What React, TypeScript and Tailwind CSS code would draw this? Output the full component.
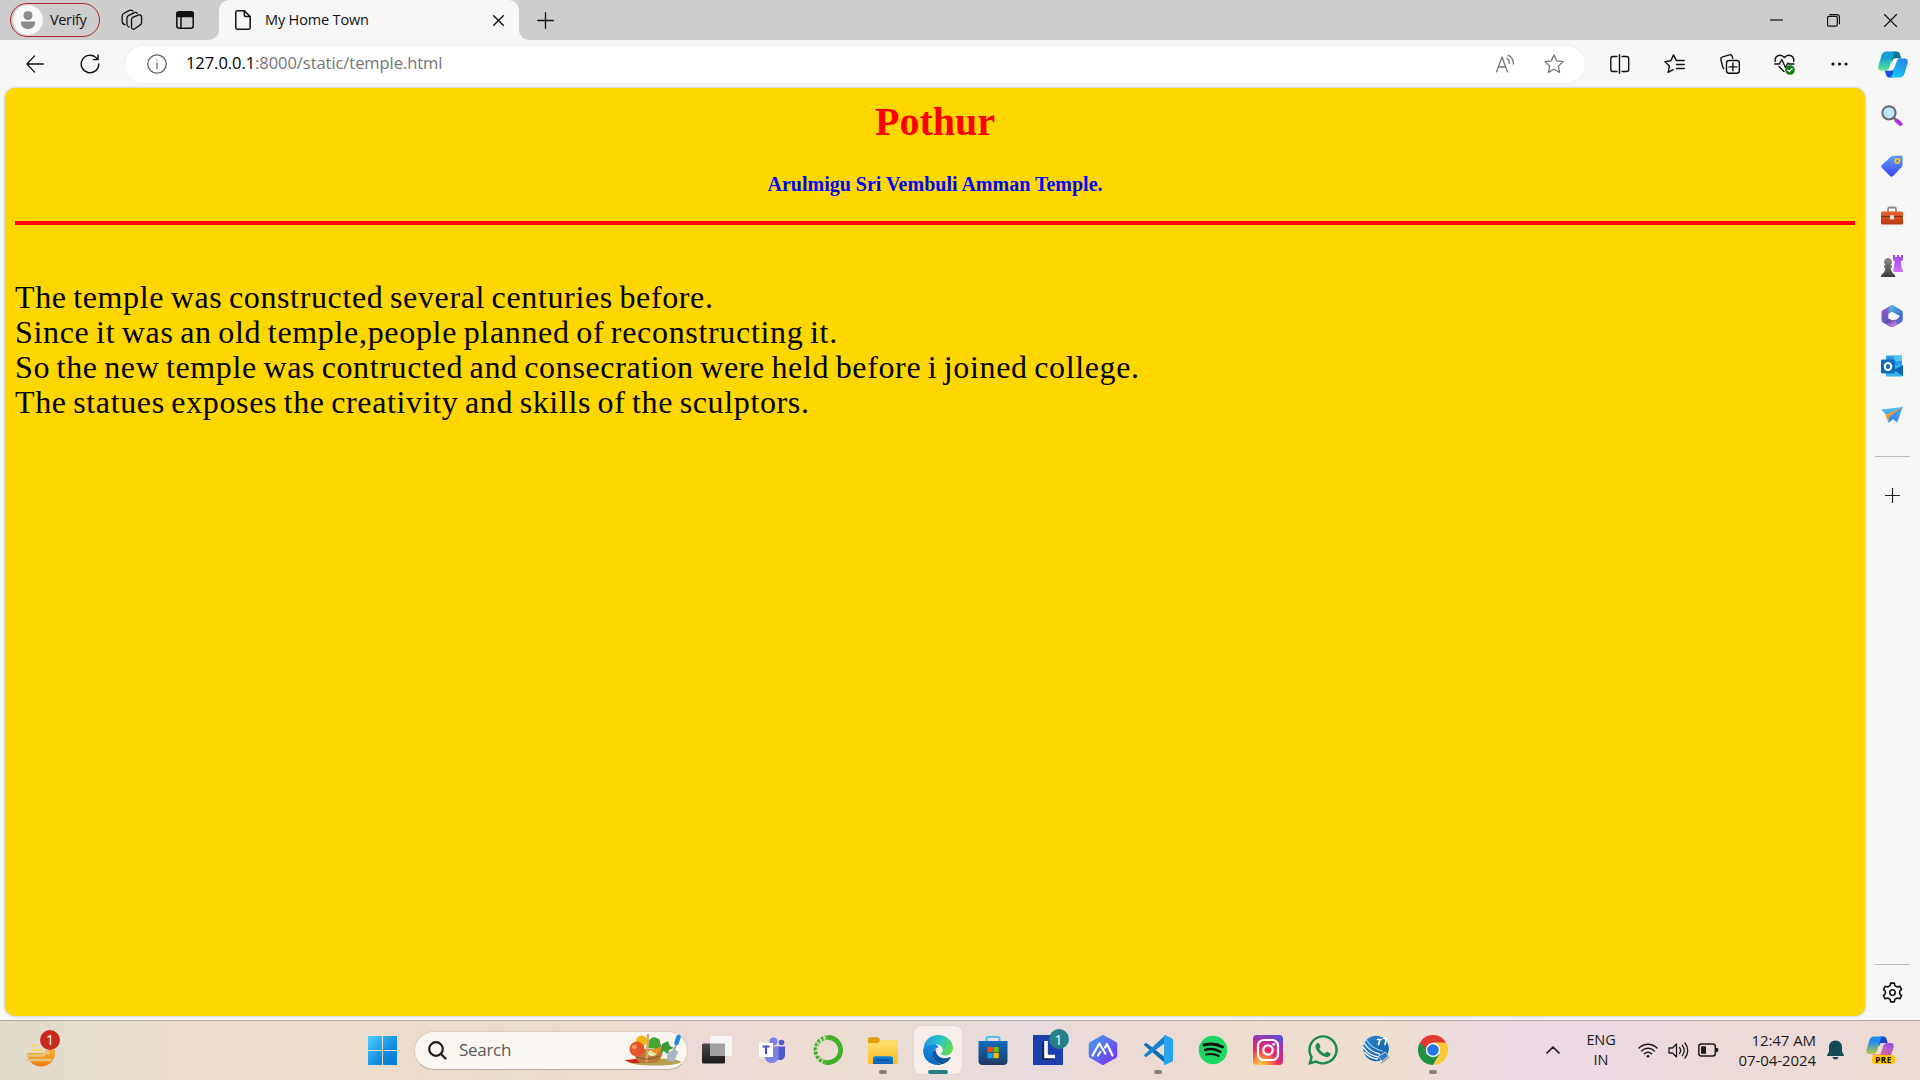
import React from "react";
import { FaWhatsapp } from "react-icons/fa";

type SvgProps = {
  w?: number;
  h?: number;
  vb: string;
  sw?: number;
  className?: string;
  children: React.ReactNode;
};

function Svg({ w = 24, h, vb, sw = 1.5, className = "", children }: SvgProps) {
  return (
    <svg
      width={w}
      height={h ?? w}
      viewBox={vb}
      fill="none"
      stroke="currentColor"
      strokeWidth={sw}
      strokeLinecap="round"
      strokeLinejoin="round"
      className={"block shrink-0 " + className}
    >
      {children}
    </svg>
  );
}

function Stop({ o, c }: { o: number; c: string }) {
  return <stop offset={o} stopColor={c} />;
}

function Grad({ id, from, to, v = false }: { id: string; from: string; to: string; v?: boolean }) {
  return (
    <linearGradient id={id} x1="0" y1="0" x2={v ? "0" : "1"} y2="1">
      <Stop o={0} c={from} />
      <Stop o={1} c={to} />
    </linearGradient>
  );
}

type CopilotProps = { id: string; a: string; b: string; c: string; d: string; top: string; bottom: string; gap: string };

function CopilotShape({ id, a, b, c, d, top, bottom, gap }: CopilotProps) {
  return (
    <g stroke="none">
      <defs>
        <linearGradient id={id + "l"} x1="0" y1="0" x2="0" y2="1">
          <Stop o={0.3} c={a} />
          <Stop o={1} c={b} />
        </linearGradient>
        <linearGradient id={id + "r"} x1="1" y1="0" x2="0.4" y2="1">
          <Stop o={0} c={c} />
          <Stop o={1} c={d} />
        </linearGradient>
      </defs>
      <path d="M15 .5h3.500c1.800 0 2.800.9 3.400 2.600L23.300 7.500h-6l-4 4z" fill={top} />
      <path d="M15 26.500h-3.500c-1.800 0-2.800-.9-3.400-2.600L6.900 19.500h6l4-4z" fill={bottom} />
      <path d="M8.500.5h10.200c-1.900.5-2.600 1.800-3.200 3.500l-3.900 12c-.8 2.300-2 3.500-4.100 3.500H3.500c-3 0-3.800-2.200-3-5L3.500 4.500C4.300 1.800 5.800.5 8.500.5z" fill={`url(#${id}l)`} />
      <path d="M21.500 26.500H11.300c1.900-.5 2.600-1.800 3.200-3.500l3.900-12c.8-2.300 2-3.500 4.100-3.500h4c3 0 3.800 2.200 3 5l-3 10c-.8 2.700-2.300 4-5 4z" fill={`url(#${id}r)`} />
      <path d="M15.200 8.200c.3-.5.800-.7 1.400-.7h4c-1.200.7-1.800 1.800-2.300 3.200L15.800 18c-.4 1-1 1.500-2 1.500h-3.400c.8-.6 1.300-1.500 1.700-2.600z" fill={gap} />
    </g>
  );
}

/* ---------- Tab strip ---------- */

function TabStrip() {
  return (
    <div className="flex h-10 items-stretch bg-[#cdcdcd] pl-[10px] text-[15px] text-[#111]">
      <div className="mt-[3px] flex h-[34px] w-[90px] items-center rounded-full border-[1.5px] border-[#b0272d] pl-[2px]">
        <div className="flex size-[30px] items-center justify-center rounded-full bg-[#f7f7f7]">
          <Svg w={18} vb="0 0 18 18">
            <g fill="#8c8c8c" stroke="none">
              <circle cx="9" cy="4.500" r="4.500" />
              <path d="M2 10.500h14v1.500c0 3.500-3 6-7 6s-7-2.500-7-6z" />
            </g>
          </Svg>
        </div>
        <span className="ml-[7px] text-[14.500px] tracking-[-0.35px]">Verify</span>
      </div>
      <div className="ml-[21px] flex items-center">
        <Svg w={22} vb="0 0 23 23" sw={1.400}>
          <path d="M12.300 8.700l5.700-2.400c1.900-.8 3.500.2 3.500 2.200v5.800c0 1-.4 1.800-1.300 2.300l-5.700 4c-1.800 1.200-3.500.3-3.500-1.800v-7.400c0-1.300.3-2.200 1.300-2.700z" />
          <path d="M8.500 19C7 18.500 6.200 17.500 6.200 16V9.800c0-1.300.5-2.300 1.500-2.800l6.300-3.200c1.200-.5 2.300-.2 3 .7" />
          <path d="M4.200 16.500C2.200 15.800 1.200 14.500 1.200 13V7.500c0-1.300.6-2.300 1.600-2.800l6-3.200c1.300-.6 2.700-.3 3.500.6" />
        </Svg>
      </div>
      <div className="ml-[33px] flex w-[18px] items-center">
        <Svg w={18} h={18} vb="0 0 18 18" sw={1.500}>
          <rect x="0.800" y="0.800" width="16.400" height="16.400" rx="2.500" />
          <path d="M1 1.500h16v4H1z" fill="currentColor" />
          <path d="M5 5v12" />
        </Svg>
      </div>
      <div className="ml-[15px] flex w-[10px] items-stretch bg-[#f7f7f7]">
        <div className="w-full rounded-br-[10px] bg-[#cdcdcd]" />
      </div>
      <div className="flex w-[300px] items-center rounded-t-[10px] bg-[#f7f7f7] pl-[16px]">
        <Svg w={16} h={20} vb="0 0 16 20" sw={1.500}>
          <path d="M2.500.8h6.800l5.900 5.800v10.900c0 1-.7 1.700-1.700 1.700h-11c-1 0-1.700-.7-1.700-1.700v-15C.8 1.500 1.500.8 2.500.8z" />
          <path d="M9.300.8v4.300c0 1 .5 1.500 1.500 1.500h4.400" />
        </Svg>
        <span className="ml-[14px] w-[228px] text-[14.500px] tracking-[-0.150px]">My Home Town</span>
        <Svg w={11} vb="0 0 11 11" sw={1.400}>
          <path d="M.7.7l9.600 9.600M10.300.7L.7 10.300" />
        </Svg>
      </div>
      <div className="flex w-[10px] items-stretch bg-[#f7f7f7]">
        <div className="w-full rounded-bl-[10px] bg-[#cdcdcd]" />
      </div>
      <div className="ml-[8px] flex items-center">
        <Svg w={17} vb="0 0 18 18" sw={1.400}>
          <path d="M9 .7v16.600M.7 9h16.600" />
        </Svg>
      </div>
      <div className="mr-px ml-auto flex items-center">
        <div className="flex w-[58px] justify-center">
          <Svg w={13} vb="0 0 13 13" sw={1.200}>
            <path d="M0 6h13" strokeLinecap="butt" />
          </Svg>
        </div>
        <div className="flex w-[57px] justify-center">
          <Svg w={13} vb="0 0 14 14" sw={1.300}>
            <rect x="0.600" y="2.600" width="10.500" height="10.500" rx="1.500" />
            <path d="M3 .6h7.500c1.700 0 2.900 1.200 2.900 2.900v7" />
          </Svg>
        </div>
        <div className="flex w-[57px] justify-center">
          <Svg w={13} vb="0 0 13 13" sw={1.200}>
            <path d="M.5.5l12 12M12.500.5l-12 12" />
          </Svg>
        </div>
      </div>
    </div>
  );
}

/* ---------- Address toolbar ---------- */

const STAR = "M10 .9l2.700 5.900 6.400.8-4.700 4.400 1.200 6.400L10 15.300l-5.600 3.100L5.600 12 .9 7.600l6.400-.8z";

function Toolbar() {
  return (
    <div className="flex h-12 items-center bg-[#f7f7f7] text-[#111]">
      <div className="ml-[25px] flex w-[55px]">
        <Svg w={20} h={18} vb="0 0 20 20" sw={1.400} className="-mt-px">
          <path d="M19.300 10H1M9.500 1L1 10l8.500 9" />
        </Svg>
      </div>
      <div className="flex w-[45px]">
        <Svg w={20} vb="0 0 21 21" sw={1.500}>
          <path d="M19.700 10.500a9.200 9.200 0 1 1-3-6.800l2 2M19 .9v5h-5" />
        </Svg>
      </div>
      <div className="flex h-[37px] w-[1460px] items-center rounded-full bg-white shadow-[0_0_3px_rgba(0,0,0,0.08)]">
        <Svg w={20} vb="0 0 20 20" sw={1.300} className="ml-[22px] text-[#666]">
          <circle cx="10" cy="10" r="9.200" />
          <path d="M10 9v5.500M10 5.800v.2" />
        </Svg>
        <span className="mb-px ml-[19px] text-[16.500px] tracking-[-0.060px] text-[#757575]">
          <span className="text-black">127.0.0.1</span>:8000/static/temple.html
        </span>
        <Svg w={20} vb="0 0 20 20" sw={1.300} className="mr-[29px] ml-auto text-[#777]">
          <path d="M1.500 18L7 3l5.500 15M3.300 13h7.400" />
          <path d="M12 4.500c1.600 1 2.500 2.700 2.500 5M13 1.200c3.500 1.500 5.500 4.300 5.500 9" />
        </Svg>
        <Svg w={20} vb="0 0 20 20" sw={1.300} className="mr-[21px] text-[#777]">
          <path d={STAR} />
        </Svg>
      </div>
      <div className="ml-[7px] flex items-center">
        <div className="flex w-[55px] justify-center">
          <Svg w={20} vb="0 0 20 20" sw={1.400}>
            <path d="M9.500.7v18.600M7 2.500H3C1.700 2.500.8 3.400.8 4.700v10.600c0 1.300.9 2.200 2.200 2.200h4M12 2.500h4.500c1.300 0 2.200.9 2.200 2.200v10.600c0 1.300-.9 2.200-2.200 2.200H12" />
          </Svg>
        </div>
        <div className="flex w-[55px] justify-center">
          <Svg w={21} h={20} vb="0 0 21 20" sw={1.400}>
            <path d="M12.300 6.500L9.500.9 6.800 6.800l-6 .8L5.400 12l-1.200 6.400 4.900-2.700" />
            <path d="M12.500 6.500h7.800M12.500 10.500h7.800M12.500 14.500h7.800" />
          </Svg>
        </div>
        <div className="flex w-[55px] justify-center">
          <Svg w={20} vb="0 0 20 20" sw={1.400}>
            <path d="M3.800 14.500c-.6-.2-.9-.7-1.100-1.400L.9 5.500c-.3-1.300.3-2.300 1.500-2.600L9.500.9c1.300-.3 2.300.3 2.700 1.500l.5 2" />
            <rect x="6.500" y="6.500" width="12.800" height="12.800" rx="2.500" />
            <path d="M12.900 9v7.800M9 12.900h7.800" />
          </Svg>
        </div>
        <div className="flex w-[55px] justify-center">
          <Svg w={21} vb="0 0 21 21" sw={1.400}>
            <path d="M1.200 7.500C.6 4 2.700 1.200 6 1.200c1.800 0 3.200.8 4.400 2.300 1.200-1.500 2.600-2.300 4.400-2.300 3.500 0 5.500 2.800 5 6.300M5 12.500l5 5" />
            <path d="M.8 10h4.500l2.500-4.500 3.600 8 2.500-4.500 1 1h5" />
            <circle cx="16" cy="16" r="4.800" fill="#127c12" stroke="none" />
            <path d="M13.800 16.200l1.500 1.300 2.700-2.800" stroke="white" />
          </Svg>
        </div>
        <div className="flex w-[55px] justify-center">
          <Svg w={17} h={4} vb="0 0 17 4">
            <g fill="currentColor" stroke="none">
              <circle cx="2" cy="2" r="1.600" />
              <circle cx="8.500" cy="2" r="1.600" />
              <circle cx="15" cy="2" r="1.600" />
            </g>
          </Svg>
        </div>
      </div>
      <div className="ml-[11px]">
        <Svg w={30} h={27} vb="0 0 30 27">
          <CopilotShape id="cb" a="#129fd8" b="#5fe592" c="#2b7be4" d="#12c8f4" top="#0f6f96" bottom="#1b50d8" gap="#f7f7f7" />
        </Svg>
      </div>
    </div>
  );
}

/* ---------- Sidebar ---------- */

const sideIcons: React.ReactNode[] = [
  <>
    <path d="M15.500 15.500l4 3.500" stroke="#b42bf0" strokeWidth="4" />
    <path d="M12.500 12.500l2 2" stroke="#777" strokeWidth="2.500" />
    <circle cx="8" cy="7.800" r="6.600" fill="#bfe6fa" stroke="#666" strokeWidth="2" />
  </>,
  <g stroke="none">
    <defs><Grad id="tag" from="#5ea0ff" to="#3a45ee" v /></defs>
    <path d="M12 1l8-.5c1 0 1.500.5 1.500 1.500v8c0 1-.3 1.600-1 2.300L12 21c-1 1-2 1-3 0l-8-8c-1-1-1-2 0-3l8.500-8c.8-.7 1.500-1 2.500-1z" fill="url(#tag)" />
    <circle cx="16.300" cy="6" r="2.100" fill="#5b7fee" stroke="#fbc928" strokeWidth="1.800" />
  </g>,
  <>
    <defs><Grad id="box" from="#e8622c" to="#b93a12" v /></defs>
    <path d="M7 7V4c0-1 .7-1.500 1.500-1.500h5c1 0 1.500.5 1.500 1.500v3" stroke="#888" strokeWidth="1.800" />
    <rect x="0" y="6.500" width="22" height="13" rx="1.500" fill="url(#box)" stroke="none" />
    <path d="M0 11.500h22" stroke="#7c2a10" strokeWidth="1" />
    <rect x="9" y="10" width="4" height="4.500" rx="1" fill="#ddd" stroke="none" />
  </>,
  <g stroke="none">
    <defs>
      <Grad id="pawn" from="#8a8a8a" to="#3a3a3a" v />
      <Grad id="rook" from="#a247f2" to="#cc73fa" v />
    </defs>
    <path d="M12 0h2.200v2h1.800V0h2.200v2H20V0h2v5l-2 1.500.8 7.500 1.200 1v2H12.500v-3l1.200-7.500L12 5z" fill="url(#rook)" />
    <path d="M7 3a3.800 3.800 0 0 1 2.500 6.700l1.500 1v1.800H9.700c0 3 .8 4.500 3 6.500 1 .7 1.600 1.500 1.600 3.500H0c0-2 .5-2.800 1.500-3.500 2.200-2 2.800-3.500 2.800-6.500H3v-1.800l1.500-1A3.800 3.800 0 0 1 7 3z" fill="url(#pawn)" />
  </g>,
  <g stroke="none">
    <defs>
      <Grad id="ma" from="#9a55c0" to="#5b5fc4" v />
      <Grad id="mb" from="#4cc2ee" to="#3a56b8" />
      <Grad id="mc" from="#5b3fa0" to="#d293e6" />
    </defs>
    <path d="M11 0L2 5c-1 .6-1.500 1.500-1.500 2.700v7c0 1.500.8 2.500 2 3L8 15V8l5-3z" fill="url(#ma)" />
    <path d="M10.500 0c-2 1-3 3-3 5.500V9L11 7l8 4 2.500 5V7.700c0-1.200-.5-2.100-1.500-2.700L13 .7C12.200.2 11.500 0 10.500 0z" fill="url(#mb)" />
    <path d="M21.500 8v6.700c0 1.200-.5 2.200-1.500 2.800l-7 4c-1.300.8-2.700.8-4 0L6 19.800c3 0 5-.8 7-2z" fill="#4a6bdc" />
    <path d="M2 17.300l7-4 2 2 7-1-9 7.500z" fill="#6a48a8" />
    <path d="M2.500 17.700l6.500 3.800c1.300.8 2.700.8 4 0l3-1.700-1-5-4 1.700c-3 1.700-5.500 2.200-8.500 1.200z" fill="url(#mc)" />
    <path d="M11 7l3.700 2v4.200L11 15.300 7.300 13.200V9z" fill="#f7f7f7" />
  </g>,
  <g stroke="none">
    <rect x="5" y="0.500" width="16" height="13" rx="1" fill="#2a9be4" />
    <path d="M13 .5h7c.6 0 1 .4 1 1V6h-8z" fill="#4bc8f5" />
    <path d="M5 11l17-1v10c0 1-.6 1.500-1.500 1.500h-14C5.500 21.500 5 21 5 20z" fill="#35b4f0" />
    <path d="M22 10v11L13 15z" fill="#1364b4" />
    <rect x="0" y="4.500" width="14" height="14" rx="1.200" fill="#0f6cbd" />
    <ellipse cx="7" cy="11.500" rx="3.200" ry="3.600" stroke="white" strokeWidth="2" />
  </g>,
  <g stroke="none">
    <defs><Grad id="pl" from="#55c4f5" to="#2a7ef0" v /></defs>
    <path d="M0 4.500L22 2l-6 15.500-4-3.500-4 3.500-2-7z" fill="url(#pl)" />
    <path d="M22 2L4.500 10l2.300 6.500 1.400-4.500z" fill="#f2a01e" />
    <path d="M22 2L8.200 12l-.7 6 3.500-3.500z" fill="#3b8df2" />
  </g>,
];

function gearPath(): string {
  const pts: string[] = [];
  for (let i = 0; i < 6; i++) {
    const base = i * 60 - 90;
    [[-19, 7.300], [-11, 9.600], [11, 9.600], [19, 7.300]].forEach(([a, r]) => {
      const t = ((base + a) * Math.PI) / 180;
      pts.push(`${(10.500 + r * Math.cos(t)).toFixed(2)} ${(10.500 + r * Math.sin(t)).toFixed(2)}`);
    });
  }
  return "M" + pts.join("L") + "z";
}

function Sidebar() {
  return (
    <div className="flex w-[55px] flex-col items-center pt-[3px] pr-px">
      {sideIcons.map((icon, i) => (
        <div key={i} className="flex h-[50px] items-center">
          <Svg w={22} vb="0 0 22 22">{icon}</Svg>
        </div>
      ))}
      <div className="mt-[15px] ml-px h-px w-[35px] bg-[#b9b9b9]" />
      <Svg w={15} vb="0 0 15 15" sw={1.200} className="mt-[31px] text-[#222]">
        <path d="M7.500 0v15M0 7.500h15" />
      </Svg>
      <div className="mt-auto ml-px h-px w-[35px] bg-[#b9b9b9]" />
      <Svg w={21} vb="0 0 21 21" sw={1.600} className="mt-[17px] mb-[17px] text-[#111]">
        <path d={gearPath()} />
        <circle cx="10.500" cy="10.500" r="2.700" />
      </Svg>
    </div>
  );
}

/* ---------- Web page ---------- */

function TemplePage() {
  return (
    <div className="ml-[5px] h-[928px] w-[1860px] rounded-[10px] bg-[#ffd700] px-[10px] pt-[11px] font-['Liberation_Serif',serif] shadow-[0_0_3px_rgba(0,0,0,0.3)]">
      <h1 className="h-[46px] text-center text-[40px] leading-[46px] font-bold text-[#ff0000]">Pothur</h1>
      <h2 className="mt-[28px] h-[23px] text-center text-[20px] leading-[23px] font-bold text-[#0000ff]">
        Arulmigu Sri Vembuli Amman Temple.
      </h2>
      <div className="mt-[25px] h-[4px] bg-[#ff0000]" />
      <div className="mt-[55px] text-[32px] leading-[35px] [word-spacing:-2.1px] whitespace-nowrap text-black">
        <p className="tracking-[0.640px]">The temple was constructed several centuries before.</p>
        <p className="tracking-[0.680px]">Since it was an old temple,people planned of reconstructing it.</p>
        <p className="tracking-[0.640px]">So the new temple was contructed and consecration were held before i joined college.</p>
        <p className="tracking-[0.640px]">The statues exposes the creativity and skills of the sculptors.</p>
      </div>
    </div>
  );
}

/* ---------- Taskbar ---------- */

function App30({ children }: { children: React.ReactNode }) {
  return <Svg w={30} vb="0 0 30 30">{children}</Svg>;
}

const teams = (
  <Svg w={30} vb="2 0 30 30">
    <g stroke="none">
      <circle cx="25.500" cy="7.500" r="2.800" fill="#5059c9" />
      <path d="M20 11.500h9v8.500c0 3-2 5-5 5-2 0-4-1-4-3z" fill="#5059c9" />
      <circle cx="17.500" cy="6.500" r="4" fill="#7b83eb" />
      <path d="M9 11.500h13.500v10c0 4-3 6.500-6.800 6.500S9 25.500 9 21.500z" fill="#7b83eb" />
      <rect x="3" y="8" width="14" height="14" fill="white" />
    </g>
    <path d="M6.500 11.500h7M10 11.500v7.500" stroke="#4b53bc" strokeWidth="2.200" strokeLinecap="butt" />
  </Svg>
);

const anaconda = (
  <App30>
    <path d="M15 2.500a12.500 12.500 0 1 1-3 24.600" stroke="#43b02a" strokeWidth="4.800" strokeLinecap="butt" />
    <path d="M15 2.500a12.500 12.500 0 0 0-3 24.600" stroke="#43b02a" strokeWidth="4.200" strokeLinecap="butt" strokeDasharray="3 1.200" />
    <path d="M13 2.500a12.500 12.500 0 0 0-4 22" stroke="#e9ddd0" strokeWidth="1" strokeDasharray="3 2" />
  </App30>
);

const explorer = (
  <App30>
    <defs><Grad id="fo" from="#ffdf70" to="#fbbd24" v /><Grad id="fb" from="#0f86dd" to="#1160b8" v /></defs>
    <g stroke="none">
      <path d="M0 4c0-1 .7-1.800 1.800-1.800h7c1 0 1.700.3 2.300 1.300l1.500 2H29V10H0z" fill="#dfa008" />
      <path d="M0 8h10l2.500-2.700H28c1.200 0 2 .7 2 1.700v20c0 1.200-.8 2-2 2H2c-1.200 0-2-.8-2-2z" fill="url(#fo)" />
      <path d="M5 29v-5.500c0-1.500 1-2.300 2.300-2.300h15.400c1.300 0 2.300.8 2.300 2.300V29z" fill="url(#fb)" />
    </g>
    <path d="M9 25h12" stroke="#0b4c94" strokeWidth="1.300" />
  </App30>
);

const edge = (
  <App30>
    <defs>
      <linearGradient id="ea" x1="0" y1="0.300" x2="1" y2="0.600">
        <Stop o={0} c="#1b9de2" /><Stop o={0.5} c="#2cc3c9" /><Stop o={1} c="#62dd4e" />
      </linearGradient>
      <Grad id="eb" from="#1590e0" to="#0b66c0" v />
    </defs>
    <g stroke="none">
      <path d="M0.500 13C1.500 5 8 0 15 0c8.500 0 15 6 15 13 0 4.500-3.500 7.500-7.500 7.500-3 0-5-1-4.500-2.200 1.300-1 1.800-2 1.800-3.300 0-3.500-3.500-6-8-6C7 9 3 11 .5 13z" fill="url(#ea)" />
      <path d="M12 9C6 9 1 11 .1 14.500-.3 23.500 6 30 15 30c2 0 3-.3 4-.7-5-.3-9.500-5-9-10 .2-3.500 2-6 5.500-7-1-2-2-3.300-3.500-3.300z" fill="url(#eb)" />
      <path d="M12.500 14c-2 1.500-3 3.500-2.700 6.300.7 6 6 9.700 10.700 8.500 3-1 5.500-3 7.200-6 .3-.7-.3-1-.9-.7-6 3-14 .3-14.300-8.100z" fill="#0c55a0" />
    </g>
  </App30>
);

const store = (
  <App30>
    <defs><Grad id="st" from="#0f6cbd" to="#233a63" v /></defs>
    <path d="M8.500 7V3.500c0-1 .7-1.700 1.700-1.700h9.600c1 0 1.700.7 1.700 1.700V7" stroke="#3cbcf0" strokeWidth="1.800" />
    <path d="M.5 6h29v20c0 2.500-1.500 4-4 4h-21c-2.500 0-4-1.500-4-4z" fill="url(#st)" stroke="none" />
    <g stroke="none">
      <rect x="9.500" y="12" width="5.200" height="5.200" fill="#f25022" />
      <rect x="15.500" y="12" width="5.200" height="5.200" fill="#7fba00" />
      <rect x="9.500" y="18" width="5.200" height="5.200" fill="#00a4ef" />
      <rect x="15.500" y="18" width="5.200" height="5.200" fill="#ffb900" />
    </g>
  </App30>
);

const lApp = (
  <div className="relative">
    <App30>
      <rect width="30" height="30" fill="#1e3fae" stroke="none" />
      <path d="M9 8l2-2v15h10l-1 4H9z" fill="#0f2464" stroke="none" />
      <path d="M13 6v15.500h9" stroke="white" strokeWidth="3.600" strokeLinecap="butt" strokeLinejoin="miter" />
    </App30>
    <div className="absolute -top-[6px] left-[16px] flex size-[20px] items-center justify-center rounded-full bg-[#26808a] text-[14px] text-white">1</div>
  </div>
);

const aApp = (
  <App30>
    <defs><Grad id="aa" from="#3fa0f0" to="#7a2cf0" /></defs>
    <path d="M15 .7l12.500 7c.7.400 1 1 1 1.800v11c0 .8-.3 1.400-1 1.800l-12.500 7-12.500-7c-.7-.4-1-1-1-1.800v-11c0-.8.3-1.400 1-1.800z" fill="url(#aa)" stroke="url(#aa)" />
    <path d="M4.500 20.500L11.300 8.500l6 10M10 20.500l2.300-3.500M17 12.500l2-3.500 5.500 11.500" stroke="white" strokeWidth="2.200" />
  </App30>
);

const vscode = (
  <App30>
    <g stroke="none">
      <path d="M2 8.500c.6-.5 1.300-.5 2 0L23 23v6L1.500 10.500c-.7-.7-.6-1.200.5-2z" fill="#0a6cb4" />
      <path d="M1.500 19.500L22.500 0v7.500L4 21.500c-.7.500-1.400.5-2 0-1-.8-1.100-1.400-.5-2z" fill="#1482cc" />
      <path d="M22 0l7 3.300c.6.300 1 .9 1 1.700v20c0 .8-.4 1.400-1 1.700L22 30c-.8 0-1-.5-1-1V1c0-.5.200-1 1-1z" fill="#2aa4f0" />
    </g>
  </App30>
);

const spotify = (
  <App30>
    <circle cx="15" cy="15" r="14.300" fill="#1ed760" stroke="none" />
    <path d="M6 10c6-1.800 13-1.200 18.500 2" stroke="#111" strokeWidth="3" />
    <path d="M7 15c5-1.500 11-.8 15.500 1.800" stroke="#111" strokeWidth="2.500" />
    <path d="M8 19.500c4.500-1.100 9-.6 12.800 1.600" stroke="#111" strokeWidth="2" />
  </App30>
);

const instagram = (
  <App30>
    <defs>
      <radialGradient id="ig" cx="0.250" cy="1.050" r="1.150">
        <Stop o={0} c="#ffdc60" /><Stop o={0.25} c="#fd8a35" /><Stop o={0.5} c="#ee2a62" /><Stop o={0.8} c="#b32ba8" /><Stop o={1} c="#5a50d0" />
      </radialGradient>
    </defs>
    <rect width="30" height="30" rx="4" fill="url(#ig)" stroke="none" />
    <rect x="5" y="5" width="20" height="20" rx="5.500" stroke="white" strokeWidth="2.200" />
    <circle cx="15" cy="15" r="4.700" stroke="white" strokeWidth="2.200" />
    <circle cx="20.700" cy="9.300" r="1.400" fill="white" stroke="none" />
  </App30>
);

const globe = (
  <Svg w={30} vb="1.500 0 30 30">
    <defs><Grad id="gl" from="#2b8ad6" to="#0d5a9c" /></defs>
    <circle cx="14.500" cy="13.500" r="12.800" fill="url(#gl)" stroke="none" />
    <path d="M3 8.500c4 6 9 9 15 10.500M2 12.500c4 6 9 8.500 15 9.500M3 17.500c4 4 8 6 13 6.500" stroke="white" strokeWidth="1.300" />
    <path d="M5 5c3 6 8 9 16 11" stroke="#9cc6e6" strokeWidth="1.200" />
    <path d="M16 4.500h4M18.500 4.500L17 9.500M22 3.500h4M25 3.500l-1.500 6" stroke="white" strokeWidth="1.700" />
    <path d="M17 21l7-4 3 4-6 5z" fill="#2a7cc4" stroke="#cfd6dc" strokeWidth="1" />
    <path d="M20 28l7.500-6" stroke="#999" strokeWidth="1.200" />
  </Svg>
);

const chrome = (
  <App30>
    <g stroke="none">
      <path d="M15 15L2 7.500A15 15 0 0 1 28 7.500z" fill="#e33b2e" />
      <path d="M15 7.500h13A15 15 0 0 1 15 30l6.500-11z" fill="#fcc934" />
      <path d="M2 7.500A15 15 0 0 0 15 30l6.500-11.300L8.500 18.700z" fill="#1e9143" />
      <path d="M2 7.500h13v7.500H8.500v3.700z" fill="#e33b2e" />
      <path d="M2 7.500L8.500 18.700 10 15z" fill="#1e9143" />
      <circle cx="15" cy="15" r="7.200" fill="white" />
      <circle cx="15" cy="15" r="5.800" fill="#2b74e8" />
    </g>
  </App30>
);

type TaskApp = { icon: React.ReactNode; state?: "open" | "active" };

const apps: TaskApp[] = [
  { icon: teams },
  { icon: anaconda },
  { icon: explorer, state: "open" },
  { icon: edge, state: "active" },
  { icon: store },
  { icon: lApp },
  { icon: aApp },
  { icon: vscode, state: "open" },
  { icon: spotify },
  { icon: instagram },
  { icon: <FaWhatsapp size={34} color="#1a8a52" /> },
  { icon: globe },
  { icon: chrome, state: "open" },
];

function TaskButton({ icon, state }: TaskApp) {
  const box =
    state === "active"
      ? "bg-[#f7eeea] shadow-[0_0_1px_rgba(0,0,0,0.25)]"
      : "";
  return (
    <div className="flex w-[55px] shrink-0 justify-center">
      <div className={"relative flex size-[48px] items-center justify-center rounded-[6px] " + box}>
        {icon}
        {state === "open" && <div className="absolute bottom-0 h-[4px] w-[8px] rounded-full bg-[#87807a]" />}
        {state === "active" && <div className="absolute bottom-0 h-[4px] w-[20px] rounded-full bg-[#26808a]" />}
      </div>
    </div>
  );
}

function Basket() {
  return (
    <Svg w={57} h={32} vb="0 0 57 32">
      <g stroke="none">
        <ellipse cx="31" cy="28" rx="26" ry="3.500" fill="#b5a04c" />
        <path d="M1 26c4 3 9 4 18 2l-1-3c-7-1-12 1-17 1z" fill="#cc2418" />
        <path d="M9 15h30c0 7-4 14-9 14H19c-5 0-9-6-10-14z" fill="#b97a3c" />
        <circle cx="17.500" cy="7" r="5.500" fill="#f6b80e" />
        <circle cx="13" cy="15" r="7.500" fill="#e5542b" />
        <circle cx="10.500" cy="13" r="2.500" fill="#f78e68" />
        <path d="M24 14c-1-6 2-10 6-11 3 1 7 2 6 6 2 2 1 5-3 6z" fill="#46a832" />
        <path d="M22 19c4-4 8-4 13-3l-3 5c-4 2-8 1-10-2z" fill="#eaf1b4" />
        <path d="M27 17l13-6 2 4-10 5z" fill="#f48a1e" />
        <path d="M38 10l6-3 2 5 4 2-5 2-1 5-4-4-4 2z" fill="#3a9a34" />
        <path d="M43 19l8-4 3 3-4 10c-3 0-6-1-7-3z" fill="#a9b6c4" />
      </g>
      <path d="M50 16l3-7" stroke="#8b98a6" strokeWidth="1.500" />
      <path d="M52.500 9l2-6" stroke="#1f8ae0" strokeWidth="4.500" />
      <path d="M22.500 27c1-9 1-17 1.500-26" stroke="#d8a564" strokeWidth="2.500" />
      <path d="M13 23c6 3 14 3 22-1" stroke="#8a5522" strokeWidth="1" />
    </Svg>
  );
}

function Taskbar() {
  return (
    <div className="flex h-[60px] items-center border-t border-[#b3a9a6] bg-[linear-gradient(90deg,#e2dccd_0px,#e4dccd_90px,#ecdccf_200px,#ecdccd_340px,#e9ddca_500px,#ecdad6_720px,#ebddd2_850px,#e7dbde_1030px,#ecdad5_1110px,#efdfcd_1380px,#ecdae2_1480px,#ecd9e6_1570px,#ecdad9_1720px,#ebdbd3_1920px)] pb-px text-[#1b1b1b]">
      <div className="relative ml-[26px]">
        <Svg w={30} h={36} vb="0 0 30 36" className="mb-px">
          <defs><Grad id="bowl" from="#f5a623" to="#f07c17" v /></defs>
          <path d="M1 21h28c-.3 8-6 13.500-14 13.500S2 29 1 21z" fill="url(#bowl)" stroke="none" />
          <path d="M18 21c1-2 3-3 5-3h6v4H18z" fill="#f5a42a" stroke="none" />
          <path d="M6 13.500h5M6 18h10" stroke="#f6d579" strokeWidth="2.500" />
          <path d="M1.500 23.500h15M1.500 28h23M17 23.500c1-2 3-3 6-2.500" stroke="#e2c583" strokeWidth="2.500" />
        </Svg>
        <div className="absolute -top-[2px] left-[14px] flex size-[20px] items-center justify-center rounded-full bg-[#c42b1c] text-[14px] text-white">1</div>
      </div>
      <Svg w={29} vb="0 0 29 29" className="ml-[312px]">
        <defs><linearGradient id="win" gradientUnits="userSpaceOnUse" x1="0" y1="0" x2="29" y2="29"><Stop o={0} c="#4cd0fd" /><Stop o={0.6} c="#148be0" /><Stop o={1} c="#0078d4" /></linearGradient></defs>
        <path d="M0 0h14v14H0zM15 0h14v14H15zM0 15h14v14H0zM15 15h14v14H15z" fill="url(#win)" stroke="none" />
      </Svg>
      <div className="ml-[17px] flex h-[39px] w-[274px] items-center rounded-full border border-[#dccbbf] border-b-[#bdb0a8] bg-[#f9f5f1]">
        <Svg w={19} vb="0 0 19 19" sw={2.200} className="ml-[13px]">
          <circle cx="8" cy="8" r="6.800" />
          <path d="M13 13l4.500 4.500" />
        </Svg>
        <span className="ml-[12px] text-[17px] tracking-[-0.300px] text-[#5b5b5b]">Search</span>
        <div className="mr-[6px] ml-auto"><Basket /></div>
      </div>
      <div className="flex w-[57px] justify-center">
        <Svg w={30} vb="0 0 30 30">
          <defs><Grad id="tv" from="#4a4a4a" to="#1c1c1c" v /></defs>
          <rect x="0" y="8.500" width="23" height="20" rx="1.500" fill="url(#tv)" stroke="none" />
          <rect x="8" y="1" width="22" height="20" rx="1" fill="#f6f4f4" stroke="none" />
          <path d="M8 8.500h15V21H9c-.6 0-1-.4-1-1z" fill="#a3a1a1" stroke="none" />
        </Svg>
      </div>
      {apps.map((a, i) => (
        <TaskButton key={i} icon={a.icon} state={a.state} />
      ))}
      <div className="ml-auto flex items-center">
        <Svg w={14} h={8} vb="0 0 14 8" sw={1.700}>
          <path d="M1 7l6-6 6 6" />
        </Svg>
        <div className="ml-[25px] w-[32px] text-center text-[14.500px] leading-[20px] tracking-[-0.100px]">
          <div>ENG</div>
          <div>IN</div>
        </div>
        <Svg w={20} h={15} vb="0 0 20 15" sw={1.400} className="ml-[21px]">
          <path d="M1 5c5-5 13-5 18 0M3.700 8c3.600-3.600 9-3.600 12.600 0M6.400 10.800c2-2 5.200-2 7.200 0" />
          <circle cx="10" cy="13.200" r="1.300" fill="currentColor" stroke="none" />
        </Svg>
        <Svg w={21} h={17} vb="0 0 21 17" sw={1.300} className="ml-[10px]">
          <path d="M1 6v5h3.500L8.500 15V2L4.500 6zM11.500 5.500c1.300 1.700 1.300 4.300 0 6M14.300 3.300c2.500 3 2.500 7.400 0 10.400M17 1c3.600 4.400 3.600 10.600 0 15" />
        </Svg>
        <Svg w={21} h={14} vb="0 0 21 14" sw={1.500} className="ml-[9px]">
          <rect x="0.800" y="1" width="16.500" height="12" rx="2.500" />
          <rect x="3" y="3.200" width="5" height="7.600" rx="0.500" fill="currentColor" stroke="none" />
          <path d="M18.500 5.500v3l1-.6V6z" fill="currentColor" />
        </Svg>
        <div className="ml-[17px] w-[80px] text-right text-[15px] leading-[20px] tracking-[-0.080px] whitespace-nowrap">
          <div>12:47 AM</div>
          <div>07-04-2024</div>
        </div>
        <Svg w={17} h={20} vb="0 0 17 20" className="ml-[11px] text-[#154a58]">
          <g fill="currentColor" stroke="none">
            <path d="M8.500.5c4 0 6.500 3 6.500 6.500v4.500l1.800 3.500c.3.700 0 1-.6 1H.8c-.6 0-.9-.3-.6-1L2 11.500V7C2 3.500 4.500.5 8.500.5z" />
            <path d="M5.500 17h6c-.3 1.500-1.500 2.500-3 2.500s-2.700-1-3-2.500z" />
          </g>
        </Svg>
        <div className="relative mr-[25px] ml-[22px] h-[28px] w-[29px]">
          <Svg w={28} h={25} vb="0 0 30 27">
            <CopilotShape id="cp" a="#1c8ff0" b="#b9c83a" c="#8c52f0" d="#f26a8c" top="#1b44c8" bottom="#f0a070" gap="#ebdbd5" />
          </Svg>
          <div className="absolute top-[19px] left-[6px] flex h-[9px] w-[23px] items-center justify-center rounded-[3px] bg-[#ffc20e] text-[8px] font-bold tracking-[0.500px] text-black">PRE</div>
        </div>
      </div>
    </div>
  );
}

export default function App() {
  return (
    <div className="flex h-[1080px] w-[1920px] flex-col overflow-hidden bg-[#f7f7f7] font-['Open_Sans','Noto_Sans',sans-serif]">
      <TabStrip />
      <Toolbar />
      <div className="flex h-[932px]">
        <TemplePage />
        <Sidebar />
      </div>
      <Taskbar />
    </div>
  );
}
